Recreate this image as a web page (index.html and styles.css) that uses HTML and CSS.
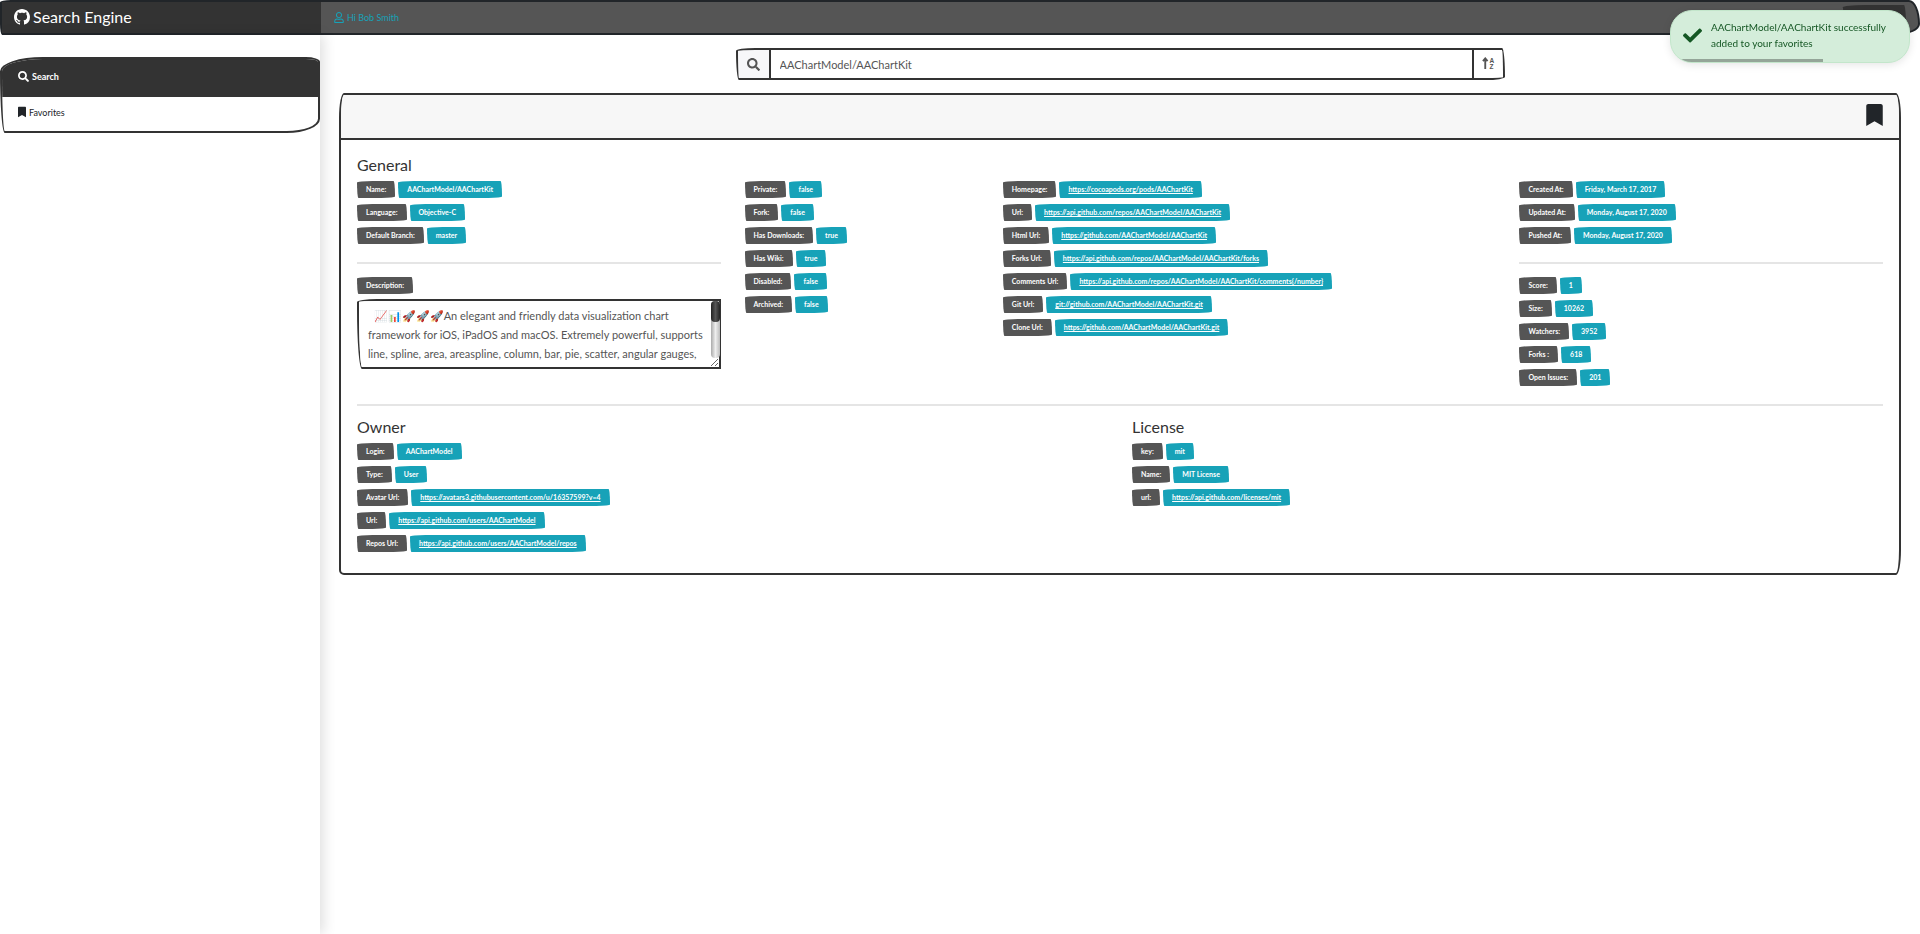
FILE: index.html
```html
<!DOCTYPE html>
<html lang="en">
<head>
<meta charset="utf-8">
<title>Search Engine</title>
<link rel="stylesheet" href="styles.css">
</head>
<body>
<svg class="sprite" aria-hidden="true">
  <symbol id="i-search" viewBox="0 0 512 512"><path d="M505 442.7L405.3 343c-4.5-4.5-10.6-7-17-7H372c27.6-35.3 44-79.7 44-128C416 93.1 322.9 0 208 0S0 93.1 0 208s93.1 208 208 208c48.3 0 92.7-16.4 128-44v16.3c0 6.4 2.5 12.5 7 17l99.7 99.7c9.4 9.4 24.6 9.4 33.9 0l28.3-28.3c9.4-9.4 9.4-24.6.1-34zM208 336c-70.7 0-128-57.2-128-128 0-70.7 57.2-128 128-128 70.7 0 128 57.2 128 128 0 70.7-57.2 128-128 128z"/></symbol>
  <symbol id="i-bookmark" viewBox="0 0 384 512"><path d="M0 512V48C0 21.5 21.5 0 48 0h288c26.500 0 48 21.500 48 48v464L192 400 0 512z"/></symbol>
</svg>

<header class="navbar">
  <a class="brand" href="#"><svg class="icon-brand" viewBox="0 0 16 16" aria-hidden="true"><path d="M8 0C3.58 0 0 3.58 0 8c0 3.54 2.29 6.53 5.47 7.59.4.07.55-.17.55-.38 0-.19-.01-.82-.01-1.49-2.01.37-2.53-.49-2.69-.94-.09-.23-.48-.94-.82-1.13-.28-.15-.68-.52-.01-.53.63-.01 1.08.58 1.23.82.72 1.21 1.87.87 2.33.66.07-.52.28-.87.51-1.07-1.78-.2-3.64-.89-3.64-3.95 0-.87.31-1.59.82-2.15-.08-.2-.36-1.02.08-2.12 0 0 .67-.21 2.2.82.64-.18 1.32-.27 2-.27s1.36.09 2 .27c1.53-1.04 2.2-.82 2.2-.82.44 1.1.16 1.92.08 2.12.51.56.82 1.27.82 2.15 0 3.07-1.87 3.75-3.65 3.95.29.25.54.73.54 1.48 0 1.07-.01 1.93-.01 2.2 0 .21.15.46.55.38A8.01 8.01 0 0016 8c0-4.42-3.58-8-8-8z"/></svg>Search Engine</a>
  <a class="greeting" href="#"><svg class="icon-user" viewBox="0 0 448 512" aria-hidden="true"><path d="M313.6 304c-28.7 0-42.5 16-89.6 16-47.1 0-60.8-16-89.6-16C60.2 304 0 364.2 0 438.4V464c0 26.5 21.5 48 48 48h352c26.500 0 48-21.500 48-48v-25.600c0-74.200-60.200-134.400-134.400-134.400zM400 464H48v-25.600c0-47.600 38.800-86.400 86.400-86.400 14.600 0 38.300 16 89.600 16 51.700 0 74.900-16 89.600-16 47.600 0 86.400 38.800 86.400 86.400V464zM224 288c79.500 0 144-64.500 144-144S303.500 0 224 0 80 64.500 80 144s64.500 144 144 144zm0-240c52.900 0 96 43.100 96 96s-43.100 96-96 96-96-43.100-96-96 43.100-96 96-96z"/></svg>Hi Bob Smith</a>
  <button class="nav-button" type="button" aria-label="Account"></button>
</header>

<div class="layout">
  <aside class="sidebar">
    <nav class="menu">
      <a class="menu-item active" href="#"><svg class="icon-menu" aria-hidden="true"><use href="#i-search"/></svg>Search</a>
      <a class="menu-item" href="#"><svg class="icon-menu slim" aria-hidden="true"><use href="#i-bookmark"/></svg>Favorites</a>
    </nav>
  </aside>

  <main class="content">
    <form class="search">
      <label class="search-label" for="q"><svg class="icon-search" aria-label="Search"><use href="#i-search"/></svg></label>
      <input class="search-input" id="q" type="text" value="AAChartModel/AAChartKit">
      <button class="sort-button" type="button" aria-label="Sort"><svg class="icon-sort" viewBox="0 0 14 14" aria-hidden="true"><path d="M3.500 13V2M1 4.500L3.500 1.500L6 4.500" fill="none" stroke="currentColor" stroke-width="2"/><text x="8" y="6">A</text><text x="8" y="13">Z</text></svg></button>
    </form>

    <article class="card">
      <div class="card-header">
        <button class="mark" type="button" aria-label="Bookmark"><svg class="icon-mark" aria-hidden="true"><use href="#i-bookmark"/></svg></button>
      </div>
      <div class="card-body">
        <h2 class="title">General</h2>
        <div class="row">
          <section class="col quarter">
            <p class="line"><span class="badge">Name:</span><span class="badge info">AAChartModel/AAChartKit</span></p>
            <p class="line"><span class="badge">Language:</span><span class="badge info">Objective-C</span></p>
            <p class="line"><span class="badge">Default Branch:</span><span class="badge info">master</span></p>
            <hr class="rule">
            <p class="line"><label class="badge" for="description">Description:</label></p>
            <div class="description-box">
              <textarea class="description" id="description">  📈📊🚀🚀🚀An elegant and friendly data visualization chart framework for iOS, iPadOS and macOS. Extremely powerful, supports line, spline, area, areaspline, column, bar, pie, scatter, angular gauges, arearange, areasplinerange, columnrange, bubble, box plot, error bars, funnel, waterfall and polar chart types.</textarea>
              <span class="scrollbar" aria-hidden="true"><span class="scrollbar-thumb"></span></span>
            </div>
          </section>
          <section class="col sixth">
            <p class="line"><span class="badge">Private:</span><span class="badge info">false</span></p>
            <p class="line"><span class="badge">Fork:</span><span class="badge info">false</span></p>
            <p class="line"><span class="badge">Has Downloads:</span><span class="badge info">true</span></p>
            <p class="line"><span class="badge">Has Wiki:</span><span class="badge info">true</span></p>
            <p class="line"><span class="badge">Disabled:</span><span class="badge info">false</span></p>
            <p class="line"><span class="badge">Archived:</span><span class="badge info">false</span></p>
          </section>
          <section class="col third">
            <p class="line"><span class="badge">Homepage:</span><a class="badge info" href="#">https://cocoapods.org/pods/AAChartKit</a></p>
            <p class="line"><span class="badge">Url:</span><a class="badge info" href="#">https://api.github.com/repos/AAChartModel/AAChartKit</a></p>
            <p class="line"><span class="badge">Html Url:</span><a class="badge info" href="#">https://github.com/AAChartModel/AAChartKit</a></p>
            <p class="line"><span class="badge">Forks Url:</span><a class="badge info" href="#">https://api.github.com/repos/AAChartModel/AAChartKit/forks</a></p>
            <p class="line"><span class="badge">Comments Url:</span><a class="badge info" href="#">https://api.github.com/repos/AAChartModel/AAChartKit/comments{/number}</a></p>
            <p class="line"><span class="badge">Git Url:</span><a class="badge info" href="#">git://github.com/AAChartModel/AAChartKit.git</a></p>
            <p class="line"><span class="badge">Clone Url:</span><a class="badge info" href="#">https://github.com/AAChartModel/AAChartKit.git</a></p>
          </section>
          <section class="col quarter">
            <p class="line"><span class="badge">Created At:</span><span class="badge info">Friday, March 17, 2017</span></p>
            <p class="line"><span class="badge">Updated At:</span><span class="badge info">Monday, August 17, 2020</span></p>
            <p class="line"><span class="badge">Pushed At:</span><span class="badge info">Monday, August 17, 2020</span></p>
            <hr class="rule">
            <p class="line"><span class="badge">Score:</span><span class="badge info">1</span></p>
            <p class="line"><span class="badge">Size:</span><span class="badge info">10262</span></p>
            <p class="line"><span class="badge">Watchers:</span><span class="badge info">3952</span></p>
            <p class="line"><span class="badge">Forks :</span><span class="badge info">618</span></p>
            <p class="line"><span class="badge">Open Issues:</span><span class="badge info">201</span></p>
          </section>
        </div>
        <hr class="rule section-rule">
        <div class="row">
          <section class="col half">
            <h2 class="title">Owner</h2>
            <p class="line"><span class="badge">Login:</span><span class="badge info">AAChartModel</span></p>
            <p class="line"><span class="badge">Type:</span><span class="badge info">User</span></p>
            <p class="line"><span class="badge">Avatar Url:</span><a class="badge info" href="#">https://avatars3.githubusercontent.com/u/16357599?v=4</a></p>
            <p class="line"><span class="badge">Url:</span><a class="badge info" href="#">https://api.github.com/users/AAChartModel</a></p>
            <p class="line"><span class="badge">Repos Url:</span><a class="badge info" href="#">https://api.github.com/users/AAChartModel/repos</a></p>
          </section>
          <section class="col half">
            <h2 class="title">License</h2>
            <p class="line"><span class="badge">key:</span><span class="badge info">mit</span></p>
            <p class="line"><span class="badge">Name:</span><span class="badge info">MIT License</span></p>
            <p class="line"><span class="badge">url:</span><a class="badge info" href="#">https://api.github.com/licenses/mit</a></p>
          </section>
        </div>
      </div>
    </article>
  </main>
</div>

<div class="toast" role="status">
  <svg class="icon-check" viewBox="0 0 512 512" aria-hidden="true"><path d="M173.898 439.404l-166.400-166.400c-9.997-9.997-9.997-26.206 0-36.204l36.203-36.204c9.997-9.998 26.207-9.998 36.204 0L192 312.690 432.095 72.596c9.997-9.997 26.207-9.997 36.204 0l36.203 36.204c9.997 9.997 9.997 26.206 0 36.204l-294.400 294.401c-9.998 9.997-26.207 9.997-36.204-.001z"/></svg>
  <p class="toast-text">AAChartModel/AAChartKit successfully added to your favorites</p>
  <span class="toast-progress" style="width:64%"></span>
</div>
</body>
</html>
```

FILE: styles.css
```css
* { box-sizing: border-box; }

body {
  margin: 0;
  min-height: 100vh;
  display: flex;
  flex-direction: column;
  background: #fff;
  color: #555;
  font-family: Lato, sans-serif;
  font-size: 9px;
}

p, h2 { margin: 0; }
a { color: inherit; text-decoration: none; }
svg { fill: currentColor; flex: none; }
button { padding: 0; border: 0; background: none; font: inherit; color: inherit; }
.sprite { position: absolute; width: 0; height: 0; }

.navbar {
  display: flex;
  height: 35px;
  border: 2px solid #212529;
  border-radius: 25px 25px 55px 5px / 5px 55px 25px 25px;
  background: #555;
  overflow: hidden;
}
.brand {
  display: flex;
  align-items: center;
  gap: 3px;
  width: 319px;
  padding: 0 12px 2px;
  background: #333;
  color: #fff;
  font-size: 16px;
}
.icon-brand { width: 16px; height: 16px; }
.greeting {
  display: flex;
  align-items: center;
  gap: 3px;
  padding-left: 13px;
  color: #17a2b8;
}
.icon-user { width: 10px; height: 11px; }
.nav-button {
  width: 63px;
  height: 24px;
  margin: 3px 12px 0 auto;
  border-radius: 255px 25px 225px 25px / 25px 225px 25px 255px;
  background: #333;
}

.layout { display: flex; flex: 1; }
.sidebar {
  width: 320px;
  flex: none;
  padding-top: 22px;
  box-shadow: 4px 0 12px rgba(0, 0, 0, .12);
}
.menu {
  border: 2px solid #333;
  border-radius: 45px 15px 35px 5px / 15px 5px 15px 65px;
  overflow: hidden;
}
.menu-item {
  display: flex;
  align-items: center;
  gap: 3px;
  height: 34px;
  padding: 0 16px 4px;
  color: #212529;
}
.menu-item.active { height: 38px; background: #333; color: #fff; font-weight: bold; }
.icon-menu { width: 11px; height: 11px; }
.icon-menu.slim { width: 8px; height: 12px; }

.content { flex: 1; padding: 13px 19px 20px; }

.search {
  display: flex;
  width: calc(50% - 12px);
  min-width: 400px;
  height: 32px;
  margin: 0 auto 13px;
}
.search-label, .sort-button {
  display: flex;
  align-items: center;
  justify-content: center;
  border: 2px solid #333;
}
.search-label {
  width: 35px;
  border-radius: 20px 0 0 3px / 3px 0 0 30px;
  background: #f7f7f9;
}
.sort-button {
  width: 31px;
  padding-bottom: 2px;
  border-left: 0;
  border-radius: 0 3px 20px 0 / 0 30px 3px 0;
}
.icon-search { width: 13px; height: 13px; }
.icon-sort { width: 13px; height: 13px; font: bold 7px "Liberation Sans", sans-serif; }
.search-input {
  flex: 1;
  min-width: 0;
  padding: 0 9px;
  border: 2px solid #333;
  border-left: 0;
  color: #555;
  font: 11px Lato, sans-serif;
}

.card {
  border: 2px solid #333;
  border-radius: 5px 5px 5px 5px / 25px 25px 25px 5px;
  overflow: hidden;
}
.card-header {
  display: flex;
  justify-content: flex-end;
  height: 45px;
  padding: 9px 16px 0;
  border-bottom: 2px solid #333;
  background: #f7f7f7;
  color: #212529;
}
.mark { height: 22px; }
.icon-mark { display: block; width: 17px; height: 22px; }
.card-body { padding: 16px 16px 18px; }
.title {
  margin-bottom: 5px;
  color: #333;
  font-size: 16px;
  font-weight: normal;
  line-height: 17px;
}
.row { display: flex; margin: 0 -12px; }
.col { flex: none; padding: 0 12px; }
.quarter { width: 25%; }
.sixth { width: 16.666%; }
.third { width: 33.333%; }
.half { width: 50%; }

.line { display: flex; align-items: center; gap: 3px; height: 23px; }
.badge {
  padding: 0 9px;
  border-radius: 255px 25px 225px 25px / 25px 225px 25px 255px;
  background: #555;
  color: #fff;
  font-size: 7px;
  font-weight: bold;
  line-height: 17px;
  white-space: nowrap;
}
.info { background: #17a2b8; }
a.badge { text-decoration: underline; }

.rule { margin: 15px 0 10px; border: 0; border-top: 2px solid #e5e5e5; }
.section-rule { margin-bottom: 12px; }

.description-box { position: relative; margin-top: 2px; }
.description {
  display: block;
  width: 100%;
  height: 70px;
  padding: 5px 10px 5px 9px;
  border: 2px solid #333;
  border-radius: 20px 0 0 5px / 3px 0 0 60px;
  color: #555;
  font: 11px/19px Lato, sans-serif;
}
.scrollbar {
  position: absolute;
  top: 2px;
  right: 1px;
  bottom: 11px;
  width: 9px;
  border-radius: 4px;
  background: linear-gradient(90deg, #aaa, #eee 50%, #bbb);
}
.scrollbar-thumb {
  display: block;
  height: 21px;
  border-radius: 4px;
  background: linear-gradient(90deg, #222, #555 50%, #222);
}

.toast {
  position: fixed;
  top: 10px;
  right: 10px;
  display: flex;
  align-items: center;
  gap: 9px;
  width: 240px;
  height: 53px;
  padding: 0 20px 3px 12px;
  border: 1px solid #c3e6cb;
  border-radius: 22px;
  background: #d4edda;
  box-shadow: 0 2px 8px rgba(0, 0, 0, .1);
  color: #155724;
  overflow: hidden;
}
.icon-check { width: 19px; height: 19px; }
.toast-text { font-size: 10px; line-height: 16px; }
.toast-progress {
  position: absolute;
  left: 0;
  bottom: 0;
  height: 3px;
  background: rgba(0, 0, 0, .3);
}
```
